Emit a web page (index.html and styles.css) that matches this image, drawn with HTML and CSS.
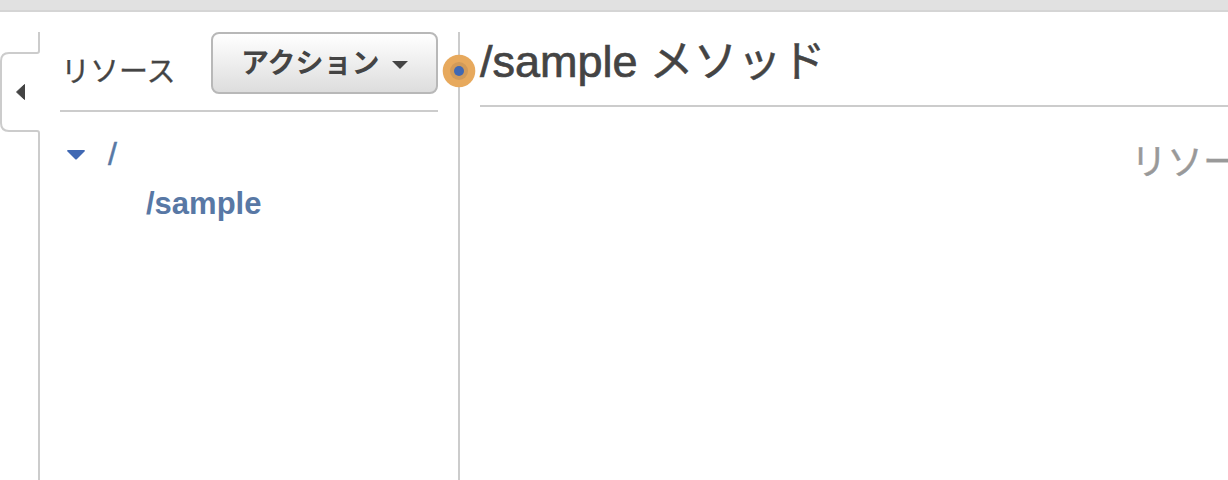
FILE: index.html
```
<!DOCTYPE html>
<html lang="ja">
<head>
<meta charset="utf-8">
<title>/sample メソッド</title>
<link rel="stylesheet" href="styles.css">
</head>
<body>
<header class="topbar"></header>
<div class="workspace">
  <div class="rail">
    <svg width="40" height="448" viewBox="0 0 40 448" fill="none">
      <path class="rail-line" d="M39 0V19Q39 21 37 21H9Q1 21 1 29V91Q1 99 9 99H37Q39 99 39 101V448"/>
      <path class="rail-arrow" d="M24.500 52.500V67.500L16.500 60Z"/>
    </svg>
  </div>
  <aside class="sidebar">
    <div class="sidebar-head">
      <h2 class="sidebar-title">リソース</h2>
      <button class="action" type="button"><span class="action-label">アクション</span><svg class="caret" width="16" height="8" viewBox="0 0 16 8"><path d="M0 0H16L8 8Z"/></svg></button>
    </div>
    <nav class="tree">
      <div class="node root"><svg class="toggle" width="18" height="10" viewBox="0 0 18 10"><path d="M1 0H17Q18.500 0 17.500 1.500L10 9Q9 10 8 9L.5 1.500Q-.5 0 1 0Z"/></svg><a class="slash">/</a></div>
      <div class="node child"><a>/sample</a></div>
    </nav>
  </aside>
  <div class="divider">
    <svg class="handle" width="34" height="34" viewBox="0 0 34 34"><circle cx="17" cy="17" r="16.300" fill="#e7a95d"/><circle cx="17" cy="17" r="9" fill="#d19a59"/><circle cx="17" cy="17" r="5" fill="#4068b3"/></svg>
  </div>
  <main class="main">
    <h1 class="title"><span class="path">/sample</span><span class="method">メソッド</span></h1>
    <p class="hint">リソー</p>
  </main>
</div>
</body>
</html>
```
FILE: styles.css
```
* { box-sizing: border-box; }
body {
  margin: 0;
  height: 480px;
  overflow: hidden;
  background: #fff;
  color: #444;
  font-family: "Liberation Sans", "Noto Sans CJK JP", sans-serif;
}
h1, h2, p { margin: 0; font-weight: 400; }
svg { display: block; flex: none; }
.topbar { height: 12px; background: #e1e1e1; border-bottom: 2px solid #d5d5d5; }
.workspace { display: flex; height: 468px; padding-top: 20px; }
.rail { width: 40px; flex: none; }
.rail-line { stroke: #ccc; stroke-width: 2; }
.rail-arrow { fill: #444; stroke: #444; stroke-width: 1; stroke-linejoin: round; }
.sidebar { width: 378px; flex: none; margin-left: 20px; }
.sidebar-head {
  display: flex;
  justify-content: space-between;
  height: 80px;
  border-bottom: 2px solid #ccc;
}
.sidebar-title {
  padding: 20px 0 0 1px;
  font-size: 29px;
  line-height: 40px;
  white-space: nowrap;
  -webkit-text-stroke: 0.300px #444;
}
.action {
  display: flex;
  align-items: center;
  width: 227px;
  height: 62px;
  padding: 1px 0 0 28px;
  border: 2px solid #b8b8b8;
  border-radius: 8px;
  background: linear-gradient(#fff, #ddd);
  color: #444;
  font: bold 28px/40px "Liberation Sans", "Noto Sans CJK JP", sans-serif;
}
.action-label { white-space: nowrap; }
.caret { margin: 3px 0 0 12px; fill: #444; }
.tree { color: #5878a5; font-size: 31px; }
.node { display: flex; align-items: center; height: 49px; }
.root { margin-top: 18px; padding-left: 7px; }
.slash { margin-left: 23px; font-size: 32px; -webkit-text-stroke: 0.500px #5878a5; }
.toggle { fill: #4068b3; }
.child { padding-left: 86px; font-weight: 700; }
.divider { position: relative; width: 2px; flex: none; margin-left: 20px; background: #ccc; }
.handle { position: absolute; left: -16px; top: 22px; }
.main { width: 748px; flex: none; margin-left: 20px; }
.title {
  display: flex;
  height: 75px;
  border-bottom: 2px solid #ccc;
  font-size: 45px;
  line-height: 60px;
  white-space: nowrap;
}
.path { -webkit-text-stroke: 0.700px #444; }
.method { margin-left: 12px; font-size: 44px; -webkit-text-stroke: 0.500px #444; }
.hint { padding: 31px 0 0 651px; color: #999; font-size: 36px; line-height: 50px; white-space: nowrap; -webkit-text-stroke: 0.400px #999; }
```
